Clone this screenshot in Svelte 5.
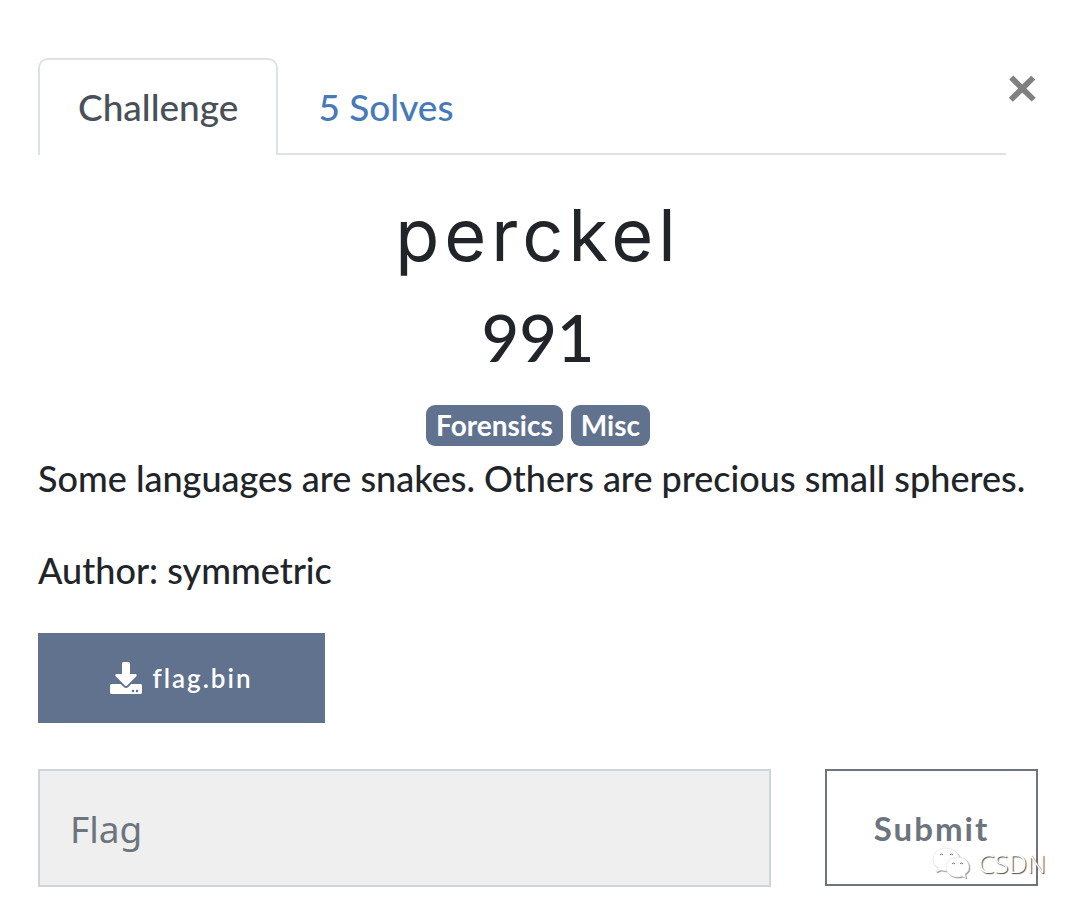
<script>
  const tabs = [
    { id: 'challenge', label: 'Challenge' },
    { id: 'solves', label: '5 Solves' }
  ]
  const tags = ['Forensics', 'Misc']

  let active = 'challenge'
  let flag = ''
</script>

<main class="challenge">
  <header>
    <nav class="tabs">
      {#each tabs as tab}
        <a
          href={`#${tab.id}`}
          class="tab"
          class:active={active === tab.id}
          on:click|preventDefault={() => (active = tab.id)}
        >{tab.label}</a>
      {/each}
    </nav>
    <button class="close" type="button" aria-label="Close">×</button>
  </header>

  <h1>perckel</h1>
  <h2>991</h2>

  <div class="tags">
    {#each tags as tag}
      <span class="tag">{tag}</span>
    {/each}
  </div>

  <p>Some languages are snakes. Others are precious small spheres.</p>
  <p class="author">Author: symmetric</p>

  <a class="download" href="#flag.bin">
    <svg viewBox="0 0 512 512" aria-hidden="true">
      <path d="M216 0h80c13.300 0 24 10.700 24 24v168h87.700c17.800 0 26.700 21.500 14.100 34.100L269.700 378.300c-7.500 7.500-19.800 7.500-27.300 0L90.100 226.100c-12.600-12.600-3.700-34.100 14.100-34.100H192V24c0-13.300 10.700-24 24-24zm296 376v112c0 13.300-10.700 24-24 24H24c-13.300 0-24-10.700-24-24V376c0-13.300 10.700-24 24-24h146.700l49 49c20.100 20.100 52.500 20.100 72.600 0l49-49H488c13.300 0 24 10.700 24 24zm-124 88c0-11-9-20-20-20s-20 9-20 20 9 20 20 20 20-9 20-20zm64 0c0-11-9-20-20-20s-20 9-20 20 9 20 20 20 20-9 20-20z" />
    </svg>
    flag.bin
  </a>

  <form on:submit|preventDefault>
    <input type="text" placeholder="Flag" aria-label="Flag" bind:value={flag} />
    <div class="action">
      <button class="submit" type="submit">Submit</button>
      <div class="watermark">
        <svg viewBox="0 0 38 32" aria-hidden="true">
          <path class="bubble" d="M14 1C7 1 1 6 1 12c0 4 2 7 5 9l-2 4 5-2c2 .7 4 1 7 1 7-1 12-5 12-11S21 1 14 1z" />
          <path class="bubble" d="M25 10c-6 0-11 4-11 10s5 10 11 10c2 0 4 0 5-1l4 2-1-4c3-2 4-4 4-7 0-6-5-10-12-10z" />
          <path class="eyes" d="M8 8q1-2 3 0M18 8q1-2 3 0M20 17q1-2 3 0M28 17q1-2 3 0" />
        </svg>
        <span>CSDN</span>
      </div>
    </div>
  </form>
</main>

<style>
  :global(body) {
    margin: 0;
    background: #fff;
  }

  .challenge {
    padding: 58px 42px 20px 38px;
    color: #212529;
    font-family: Lato, "Liberation Sans", sans-serif;
    font-size: 36px;
    font-weight: 500;
    line-height: 56px;
  }

  header {
    display: flex;
    align-items: flex-start;
  }

  .tabs {
    flex: 1;
    display: flex;
    border-bottom: 2px solid #dee2e6;
  }

  .tab {
    padding: 19px 38px 20px;
    margin-bottom: -2px;
    border: 2px solid transparent;
    border-bottom: 0;
    border-radius: 10px 10px 0 0;
    color: #467ab8;
    font-size: 37px;
    text-decoration: none;
  }

  .tab.active {
    border-color: #dee2e6;
    background: #fff;
    color: #495057;
  }

  .close {
    width: 32px;
    padding: 0;
    border: 0;
    background: none;
    color: #808080;
    font: 900 56px/56px Lato, sans-serif;
    text-align: center;
  }

  h1,
  h2 {
    margin: 0;
    text-align: center;
  }

  h1 {
    margin-top: 36px;
    font-family: Inter, sans-serif;
    font-size: 72px;
    font-weight: 400;
    line-height: 88px;
    letter-spacing: 5px;
  }

  h2 {
    margin-top: 18px;
    font-size: 65px;
    font-weight: 500;
    line-height: 80px;
  }

  .tags {
    display: flex;
    justify-content: center;
    gap: 8px;
    margin-top: 28px;
  }

  .tag {
    padding: 0 10px;
    border-radius: 9px;
    background: #61728f;
    color: #fff;
    font-size: 28px;
    font-weight: 700;
    line-height: 41px;
  }

  p {
    margin: 4px 0 0;
  }

  .author {
    margin-top: 36px;
  }

  .download {
    display: flex;
    align-items: center;
    justify-content: center;
    gap: 10px;
    box-sizing: border-box;
    width: 287px;
    height: 90px;
    margin-top: 35px;
    background: #61728f;
    color: #fff;
    font-size: 26px;
    font-weight: 600;
    letter-spacing: 2px;
    text-decoration: none;
  }

  .download svg {
    width: 32px;
    height: 32px;
    fill: currentColor;
  }

  form {
    display: flex;
    gap: 54px;
    margin-top: 46px;
  }

  input {
    flex: 1;
    min-width: 0;
    box-sizing: border-box;
    height: 118px;
    padding: 0 30px;
    border: 2px solid #ced4da;
    border-radius: 0;
    background: #efefef;
    color: #495057;
    font: 400 37px/56px "Noto Sans", sans-serif;
  }

  input::placeholder {
    color: #6c757d;
    opacity: 1;
  }

  .action {
    position: relative;
  }

  .submit {
    display: block;
    width: 213px;
    height: 117px;
    padding: 0;
    border: 2px solid #6c757d;
    background: #fff;
    color: #6c757d;
    font: 700 33px/40px Lato, sans-serif;
    letter-spacing: 2px;
  }

  .watermark {
    position: absolute;
    right: -8px;
    bottom: 8px;
    display: flex;
    align-items: center;
    gap: 8px;
    color: #fff;
    font: 300 26px/32px "Noto Sans", sans-serif;
    text-shadow: 1px 1px 1px #444;
    pointer-events: none;
  }

  .watermark svg {
    width: 38px;
    height: 32px;
    filter: drop-shadow(1px 1px 0 #999);
  }

  .bubble {
    fill: #fff;
    stroke: #ddd;
    stroke-width: .6;
  }

  .eyes {
    fill: none;
    stroke: #777;
    stroke-width: 1;
  }
</style>
